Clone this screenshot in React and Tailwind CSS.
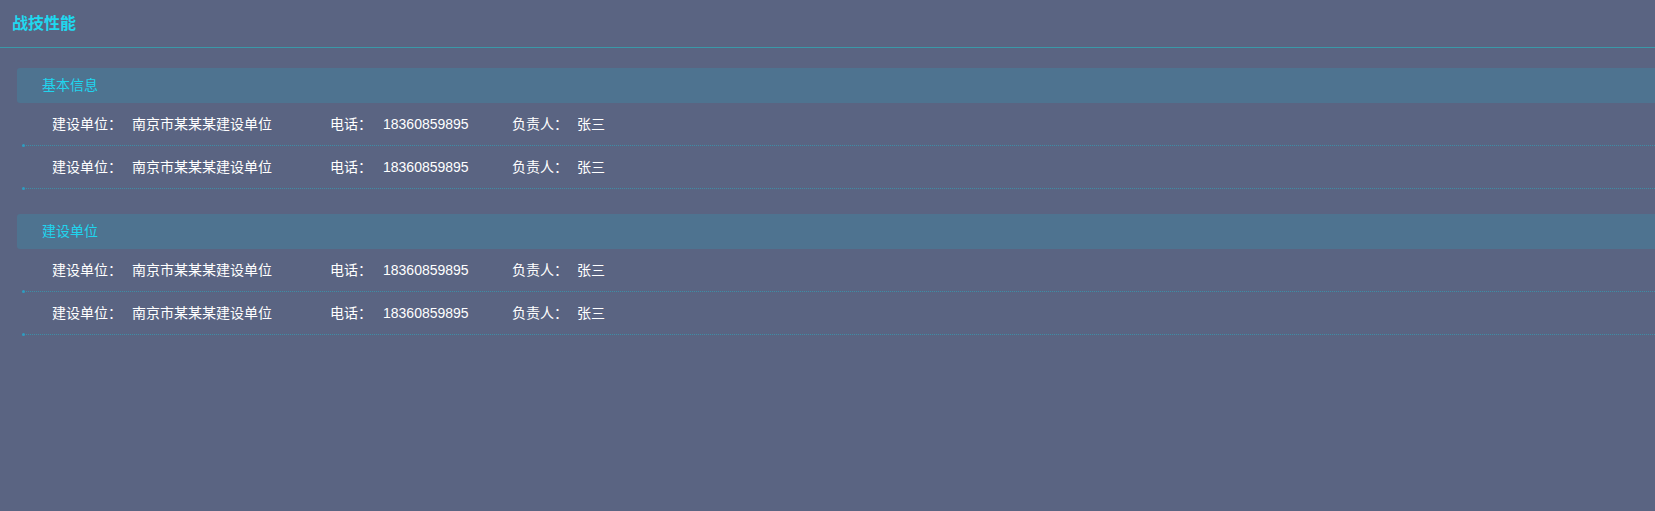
import React from "react";

const sections = [
  {
    title: "基本信息",
    rows: [
      { unit: "南京市某某某建设单位", phone: "18360859895", owner: "张三" },
      { unit: "南京市某某某建设单位", phone: "18360859895", owner: "张三" },
    ],
  },
  {
    title: "建设单位",
    rows: [
      { unit: "南京市某某某建设单位", phone: "18360859895", owner: "张三" },
      { unit: "南京市某某某建设单位", phone: "18360859895", owner: "张三" },
    ],
  },
];

function InfoRow({ row }) {
  return (
    <div className="relative ml-[5px] h-[43px] border-b border-dotted border-[#3d8ea6] flex items-center pl-[30px] text-[14px] text-white">
      {/* small dot at line start */}
      <span className="absolute left-0 bottom-[-2px] w-[3px] h-[3px] rounded-full bg-[#2f9cc0]"></span>
      <div className="flex w-[278px]">
        <span className="w-[80px]">建设单位：</span>
        <span>{row.unit}</span>
      </div>
      <div className="flex w-[182px]">
        <span className="w-[53px]">电话：</span>
        <span>{row.phone}</span>
      </div>
      <div className="flex">
        <span className="w-[65px]">负责人：</span>
        <span>{row.owner}</span>
      </div>
    </div>
  );
}

export default function App() {
  return (
    <div
      className="w-full h-[511px] bg-[#5a6482] overflow-hidden"
      style={{ fontFamily: '"Liberation Sans", "Noto Sans CJK SC", sans-serif' }}
    >
      {/* Top title */}
      <div className="h-[48px] border-b border-[#3a98a8] flex items-center pl-3">
        <h1 className="text-[16px] font-bold text-[#1fd8ef]">战技性能</h1>
      </div>

      {/* Content */}
      <div className="pl-[17px] pt-[20px]">
        {sections.map((sec, i) => (
          <div key={i} className="mb-[25px]">
            <div className="h-[35px] bg-[#4e7390] rounded-l-[3px] flex items-center pl-[25px] text-[14px] text-[#1fd5ee]">
              {sec.title}
            </div>
            {sec.rows.map((row, j) => (
              <InfoRow key={j} row={row} />
            ))}
          </div>
        ))}
      </div>
    </div>
  );
}
